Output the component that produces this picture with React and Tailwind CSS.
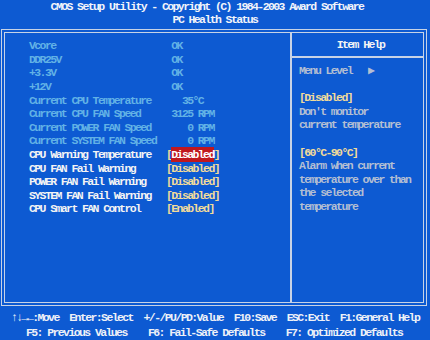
const readings = [
    ['Vcore', ' OK'],
    ['DDR25V', ' OK'],
    ['+3.3V', ' OK'],
    ['+12V', ' OK'],
    ['Current CPU Temperature', '   35°C'],
    ['Current CPU FAN Speed', ' 3125 RPM'],
    ['Current POWER FAN Speed', '    0 RPM'],
    ['Current SYSTEM FAN Speed', '    0 RPM'],
];

const options = [
    ['CPU Warning Temperature', 'Disabled', true],
    ['CPU FAN Fail Warning', 'Disabled', false],
    ['POWER FAN Fail Warning', 'Disabled', false],
    ['SYSTEM FAN Fail Warning', 'Disabled', false],
    ['CPU Smart FAN Control', 'Enabled', false],
];

function Row({ label, children, className }) {
    return (
        <div className={`flex h-[13.6px] items-center ${className}`}>
            <span className="w-[137px] shrink-0">{label}</span>
            <span className="whitespace-pre">{children}</span>
        </div>
    );
}

export default function App() {
    return (
        <div
            className="w-[430px] h-[340px] overflow-hidden bg-[#0d5ad2] text-[11.5px] font-bold tracking-[-1.6px] leading-[13px] text-[#f2f4fa]"
            style={{ fontFamily: '"Liberation Mono", "DejaVu Sans Mono", monospace' }}
        >
            <div className="text-center">
                <div className="h-[13px] pr-4 whitespace-pre">CMOS Setup Utility - Copyright (C) 1984-2003 Award Software</div>
                <div className="h-[13px]">PC Health Status</div>
            </div>

            <div className="mt-[3px] ml-[1px] flex w-[426px] h-[277px] border-[4px] border-double border-[#c7d3e6]">
                <div className="w-[287px] shrink-0 border-r-2 border-[#c7d3e6] pl-[24px] pt-[6px]">
                    {readings.map(([label, value]) => (
                        <Row key={label} label={label} className="text-[#62b2e6]">
                            {value}
                        </Row>
                    ))}
                    {options.map(([label, value, active]) => (
                        <Row key={label} label={label} className="text-[#f4f4f4]">
                            <span className="text-[#f2dc9a]">[</span>
                            <span className={active ? 'bg-[#c0181e] py-[1px] text-white' : 'text-[#f2dc9a]'}>{value}</span>
                            <span className="text-[#f2dc9a]">]</span>
                        </Row>
                    ))}
                </div>

                <div className="flex-1">
                    <div className="flex h-[25px] items-center justify-center border-b-2 border-[#c7d3e6] pl-[6px] text-[#f4f4f4]">
                        Item Help
                    </div>
                    <div className="pl-[7px] pt-[6px] leading-[13.6px] text-[#b4bfd2] whitespace-pre">
                        <div>Menu Level   ▶</div>
                        <div>&nbsp;</div>
                        <div className="text-[#f2dc9a]">[Disabled]</div>
                        <div>Don't monitor</div>
                        <div>current temperature</div>
                        <div>&nbsp;</div>
                        <div className="text-[#f2dc9a]">[60°C-90°C]</div>
                        <div>Alarm when current</div>
                        <div>temperature over than</div>
                        <div>the selected</div>
                        <div>temperature</div>
                    </div>
                </div>
            </div>

            <div className="mt-[4px] leading-[15px] whitespace-pre text-[#eef1f8]">
                <div className="pl-[11px]">↑↓→←:Move  Enter:Select  +/-/PU/PD:Value  F10:Save  ESC:Exit  F1:General Help</div>
                <div className="pl-[26px]">F5: Previous Values    F6: Fail-Safe Defaults    F7: Optimized Defaults</div>
            </div>
        </div>
    );
}
